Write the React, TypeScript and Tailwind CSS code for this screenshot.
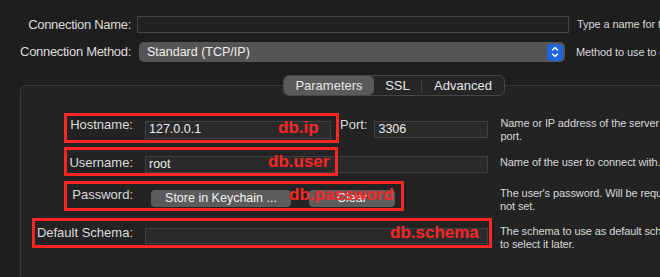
const label = "shrink-0 whitespace-nowrap text-right text-[13px] leading-[16px] text-[#dcdcdc]";
const field = "shrink-0 border border-[#414141] bg-[#2a2a2a] text-[12.5px] leading-[15px] text-[#ececec] pl-[3px]";
const desc = "shrink-0 whitespace-nowrap text-[11px] leading-[13px] tracking-[-0.1px] text-[#d8d8d8]";
const red = "absolute border-[3px] border-[#fb2727]";
const redText = "absolute whitespace-nowrap text-[17px] font-bold leading-[17px] text-[#fb2727]";

function Stepper() {
  return (
    <div className="flex h-[17px] w-[16px] shrink-0 items-center justify-center rounded-[4px] bg-[#1f66dc]">
      <svg width="10" height="14" viewBox="0 0 10 14" fill="none" stroke="white" strokeWidth="1.4" strokeLinecap="round" strokeLinejoin="round">
        <path d="M2.5 5 L5 2.5 L7.5 5" />
        <path d="M2.5 9 L5 11.5 L7.5 9" />
      </svg>
    </div>
  );
}

export default function App() {
  return (
    <div className="relative h-[277px] w-[660px] overflow-hidden bg-[#1e1e1e] font-['Liberation_Sans',Arial,sans-serif]">
      <div className="mt-[16px] flex h-[17px] items-center">
        <div className={`${label} w-[131px] tracking-[-0.3px]`}>Connection Name:</div>
        <div className="ml-[6px] h-[17px] w-[432px] shrink-0 border border-[#444] bg-[#222]" />
        <div className={`${desc} ml-[8px]`}>Type a name for the connection</div>
      </div>

      <div className="mt-[9px] flex h-[20px] items-center">
        <div className={`${label} w-[131px] tracking-[-0.3px]`}>Connection Method:</div>
        <div className="ml-[8px] flex h-[20px] w-[426px] shrink-0 items-center justify-between rounded-[5px] bg-[#555555] pl-[8px] pr-[2px]">
          <span className="text-[12.5px] text-[#f0f0f0]">Standard (TCP/IP)</span>
          <Stepper />
        </div>
        <div className={`${desc} ml-[11px]`}>Method to use to connect to the RDBMS</div>
      </div>

      <div className="ml-[20px] mt-[23px] h-[200px] w-[760px] rounded-tl-[6px] border-l border-t border-[#3a3a3a] bg-[#232323]">
        <div className="-mt-[11px] ml-[262px] flex h-[21px] w-[222px] items-center rounded-[6px] border border-[#464646] bg-[#262626] text-[13px] text-[#e6e6e6]">
          <div className="flex h-[19px] w-[90px] shrink-0 items-center justify-center rounded-[5px] bg-[#5a5a5a]">Parameters</div>
          <div className="w-[47px] shrink-0 text-center">SSL</div>
          <div className="h-[12px] w-px shrink-0 bg-[#444]" />
          <div className="flex-1 text-center">Advanced</div>
        </div>

        <div className="mt-[21px] flex h-[38px] items-start">
          <div className={`${label} w-[112px]`}>Hostname:</div>
          <div className={`${field} ml-[12px] mt-[4px] h-[18px] w-[186px]`}>127.0.0.1</div>
          <div className={`${label} ml-[9px]`}>Port:</div>
          <div className={`${field} ml-[7px] mt-[4px] h-[17px] w-[114px]`}>3306</div>
          <div className={`${desc} ml-[12px]`}>
            Name or IP address of the server host and TCP/IP
            <br />
            port.
          </div>
        </div>

        <div className="flex h-[32px] items-start">
          <div className={`${label} w-[112px]`}>Username:</div>
          <div className={`${field} ml-[12px] mt-[1px] h-[17px] w-[343px]`}>root</div>
          <div className={`${desc} ml-[12px] mt-[1px]`}>Name of the user to connect with.</div>
        </div>

        <div className="flex h-[38px] items-start">
          <div className={`${label} w-[112px]`}>Password:</div>
          <div className="ml-[18px] mt-[3px] flex h-[17px] w-[140px] shrink-0 items-center justify-center rounded-[4px] bg-[#5c5c5c] text-[12.5px] text-[#f2f2f2]">
            Store in Keychain ...
          </div>
          <div className="ml-[18px] mt-[3px] flex h-[17px] w-[86px] shrink-0 items-center justify-center rounded-[4px] bg-[#5c5c5c] text-[12.5px] text-[#f2f2f2]">
            Clear
          </div>
          <div className={`${desc} ml-[105px]`}>
            The user's password. Will be requested later if it's
            <br />
            not set.
          </div>
        </div>

        <div className="flex items-start">
          <div className={`${label} w-[112px]`}>Default Schema:</div>
          <div className={`${field} ml-[12px] mt-[3px] h-[16px] w-[343px]`} />
          <div className={`${desc} ml-[12px]`}>
            The schema to use as default schema. Leave blank
            <br />
            to select it later.
          </div>
        </div>
      </div>

      <div className={`${red} left-[64px] top-[113px] h-[30px] w-[275px]`} />
      <div className={`${red} left-[64px] top-[147px] h-[29px] w-[274px]`} />
      <div className={`${red} left-[64px] top-[181px] h-[30px] w-[340px]`} />
      <div className={`${red} left-[32px] top-[218px] h-[30px] w-[460px]`} />

      <div className={`${redText} left-[278px] top-[119px]`}>db.ip</div>
      <div className={`${redText} left-[268px] top-[153px]`}>db.user</div>
      <div className={`${redText} left-[289px] top-[186px]`}>db.password</div>
      <div className={`${redText} left-[390px] top-[224px]`}>db.schema</div>
    </div>
  );
}
